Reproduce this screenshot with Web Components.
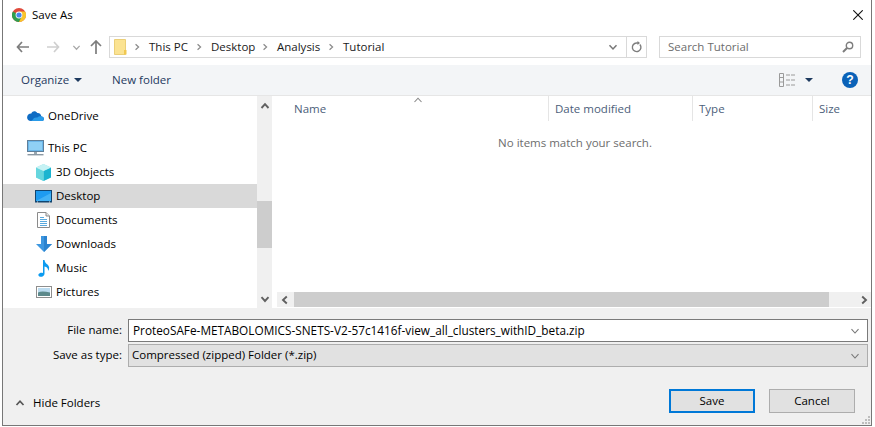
<!DOCTYPE html>
<html><head><meta charset="utf-8">
<style>
html,body{margin:0;padding:0;background:#fff;overflow:hidden}
body{font:11.5px "Open Sans","Noto Sans",sans-serif;color:#000}
</style></head>
<body>
<save-dialog>
  <title-bar slot="title">Save As</title-bar>
  <address-row slot="address"></address-row>
  <tool-bar slot="tools"></tool-bar>
  <nav-pane slot="nav">
    <nav-item icon="onedrive" level="0" style="margin-top:8px">OneDrive</nav-item>
    <nav-item icon="pc" level="0" style="margin-top:8px">This PC</nav-item>
    <nav-item icon="cube" level="1">3D Objects</nav-item>
    <nav-item icon="desktop" level="1" selected>Desktop</nav-item>
    <nav-item icon="docs" level="1">Documents</nav-item>
    <nav-item icon="down" level="1">Downloads</nav-item>
    <nav-item icon="music" level="1">Music</nav-item>
    <nav-item icon="pics" level="1">Pictures</nav-item>
  </nav-pane>
  <file-pane slot="files"></file-pane>
  <save-form slot="form"></save-form>
</save-dialog>
<script>
function def(name, css, html, init){
  customElements.define(name, class extends HTMLElement{
    connectedCallback(){
      if(this.shadowRoot) return;
      const r=this.attachShadow({mode:'open'});
      r.innerHTML='<style>'+css+'</style>'+html;
      if(init) init.call(this,r);
    }
  });
}
const chev=(d,c='#777',w=1.6,s=10)=>{
  const p={up:'M1.5 7 5 3.2 8.5 7',down:'M1.5 3.2 5 7 8.5 3.2',left:'M6.8 1.5 3 5l3.8 3.5',right:'M3.2 1.5 7 5 3.2 8.5'}[d];
  return `<svg width="${s}" height="${s}" viewBox="0 0 10 10"><path d="${p}" fill="none" stroke="${c}" stroke-width="${w}"/></svg>`;
};
const ICONS={
 onedrive:'<svg width="17" height="12" viewBox="0 0 17 12"><path d="M4 11h11c1.6 0 2-1.2 2-2.200 0-1.500-1.200-2.500-2.600-2.400C14 3.800 12 2.700 10.300 3 8.800 .6 5.500 .5 4.300 3.500 2 3.400 .2 5 .1 7.300 0 9.500 1.600 11 4 11z" fill="#0f6cc4"/><path d="M4 11h11c1.600 0 2-1.200 2-2.200 0-1.500-1.200-2.500-2.600-2.400-1.500-.3-3 0-4.100 1.200C8 7 6.500 8 6 9.500z" fill="#2a9be8"/></svg>',
 pc:'<svg width="17" height="16" viewBox="0 0 17 16"><rect x=".5" y=".5" width="16" height="11" fill="#6cb7ea" stroke="#5f7f99"/><rect x="2" y="2" width="13" height="8" fill="#8fd0f5"/><rect x="7" y="12" width="3" height="2" fill="#9aa7b0"/><rect x=".5" y="14" width="16" height="1.400" fill="#8b98a3"/></svg>',
 cube:'<svg width="17" height="17" viewBox="0 0 17 17"><path d="M8.500 0 16 3.500v10L8.500 17 1 13.500v-10z" fill="#8fe3e8"/><path d="M8.500 7 16 3.500v10L8.500 17z" fill="#1cb4d0"/><path d="M1 3.500 8.500 7v10L1 13.500z" fill="#66d6de"/><path d="M8.500 0 16 3.500 8.500 7 1 3.500z" fill="#c6f2f4"/></svg>',
 desktop:'<svg width="17" height="13" viewBox="0 0 17 13"><rect x="0" y="0" width="17" height="12.500" fill="#12456f"/><rect x="1" y="1" width="15" height="10" fill="#1e9bf0"/><path d="M1 11 16 3v8z" fill="#43b2f5"/><path d="M2 12h1M14 12h1" stroke="#ddd"/></svg>',
 docs:'<svg width="13" height="16" viewBox="0 0 13 16"><path d="M.5.500h8.500l3.500 3.500v11.500H.5z" fill="#fff" stroke="#8b8b8b"/><path d="M9 .5V4h3.500" fill="#e6e6e6" stroke="#8b8b8b"/><path d="M3 5.500h4M3 7.500h7M3 9.500h7M3 11.500h7M3 13.500h7" stroke="#5aa9dd"/></svg>',
 down:'<svg width="16" height="16" viewBox="0 0 16 16"><path d="M5 0h6v8h5l-8 8-8-8h5z" fill="#3d97e0"/><path d="M8 0h3v8h5l-8 8z" fill="#2b83cf"/></svg>',
 music:'<svg width="12" height="17" viewBox="0 0 12 17"><path d="M5 0h1.500c.3 2.500 1.500 3.300 3 4.500C11.500 6.200 11.800 9 10 11c.4-2.500-1-4-3.500-4.500v7.200c0 2-2.200 3.300-4.200 3.100C.7 16.600 0 15.400.5 14.300 1.200 12.900 3.300 12.300 5 13z" fill="#0c9bf0"/></svg>',
 pics:'<svg width="16" height="12" viewBox="0 0 16 12"><rect x=".5" y=".5" width="15" height="11" fill="#fff" stroke="#8e8e8e"/><rect x="2" y="2" width="12" height="8" fill="#bcdcf0"/><path d="M2 6.500c3-1.500 7-1 12 0V10H2z" fill="#5d8a8c"/></svg>'
};

def('save-dialog',
 `:host{display:grid;box-sizing:border-box;width:870px;height:426px;margin-left:2px;border:1px solid #777;border-top:0;
   grid-template-columns:minmax(0,1fr);grid-template-rows:30px 35px 31px 212px 1fr;background:#f0f0f0}
  .main{display:grid;grid-template-columns:269px minmax(0,1fr);background:#fff;min-height:0}`,
 `<slot name="title"></slot><slot name="address"></slot><slot name="tools"></slot>
  <div class="main"><slot name="nav"></slot><slot name="files"></slot></div><slot name="form"></slot>`);

def('title-bar',
 `:host{display:flex;align-items:center;background:#fff;padding:0 8px 0 9px;height:30px}
  .t{flex:1;margin-left:6px;padding-bottom:2px}
  svg{display:block}`,
 `<svg width="14" height="14" viewBox="0 0 14 14" style="margin-bottom:1px"><circle cx="7" cy="7" r="7" fill="#e04a3b"/><path d="M7 7 .9 3.500A7 7 0 0 0 7 14l3.500-6z" fill="#2f9e4f"/><path d="M7 3.500h6.100A7 7 0 0 1 7 14l3.500-7z" fill="#f8c52c"/><circle cx="7" cy="7" r="3.400" fill="#fff"/><circle cx="7" cy="7" r="2.600" fill="#4687ee"/></svg>
  <span class="t"><slot></slot></span>
  <svg width="10" height="10" viewBox="0 0 10 10"><path d="M.3.300l9.400 9.400M9.700.300.300 9.700" stroke="#111" stroke-width="1.100"/></svg>`);

def('address-row',
 `:host{display:flex;align-items:flex-start;background:#fff;height:35px;box-sizing:border-box;padding:6px 10px 0 13px}
  svg{display:block}
  .nav{display:flex;align-items:center;height:22px;width:93px}
  .box{display:flex;align-items:center;box-sizing:border-box;height:22px;border:1px solid #d9d9d9;width:538px;background:#fff}
  .path{flex:1;display:flex;align-items:center;min-width:0}
  .c{display:inline-flex;width:8px;justify-content:center;flex:none;margin-right:8px}
  .seg{color:#1a1a1a;flex:none;width:46px;padding-bottom:2px}
  .dd{width:26px;height:20px;display:flex;align-items:center;justify-content:center;border-right:1px solid #d9d9d9}
  .rf{width:19px;display:flex;justify-content:center}
  .search{display:flex;align-items:center;justify-content:space-between;box-sizing:border-box;margin-left:12px;width:202px;height:22px;border:1px solid #d9d9d9;padding:0 6px 0 8px;color:#6d6d6d}
  .search span{padding-bottom:2px}`,
 `<div class="nav">
   <svg width="14" height="12" viewBox="0 0 14 12"><path d="M6 1 1.500 6 6 11M1.500 6H13" fill="none" stroke="#7d7d7d" stroke-width="1.700"/></svg>
   <svg style="margin-left:16px" width="14" height="12" viewBox="0 0 14 12"><path d="M8 1l4.500 5L8 11M12.500 6H1" fill="none" stroke="#cfcfcf" stroke-width="1.700"/></svg>
   <span style="margin-left:12px;display:flex">${chev('down','#a8a8a8',1.4,9)}</span>
   <svg style="margin-left:9px" width="12" height="14" viewBox="0 0 12 14"><path d="M1 6 6 1l5 5M6 1v13" fill="none" stroke="#7d7d7d" stroke-width="1.700"/></svg>
  </div>
  <div class="box">
   <div class="path">
    <svg style="margin:0 6px 0 4px" width="13" height="16" viewBox="0 0 13 16"><path d="M.5.500h11v15H.5z" fill="#fbe392" stroke="#ebcf78"/><path d="M10 11h2.500v4.500H10z" fill="#f1c84f"/></svg>
    <span class="c">${chev('right','#8a8a8a',1.500,8)}</span>
    <span class="seg">This PC</span>
    <span class="c">${chev('right','#8a8a8a',1.500,8)}</span>
    <span class="seg" style="width:50px">Desktop</span>
    <span class="c">${chev('right','#8a8a8a',1.500,8)}</span>
    <span class="seg" style="width:50px">Analysis</span>
    <span class="c">${chev('right','#8a8a8a',1.500,8)}</span>
    <span class="seg">Tutorial</span>
   </div>
   <div class="dd">${chev('down','#777',1.500,10)}</div>
   <div class="rf"><svg width="11" height="12" viewBox="0 0 11 12"><path d="M8.900 3.500A4.300 4.300 0 1 1 5.500 2H8" fill="none" stroke="#7d7d7d" stroke-width="1.400"/><path d="M6.500 0 9 2 6.500 4z" fill="#7d7d7d"/></svg></div>
  </div>
  <div class="search"><span>Search Tutorial</span>
   <svg width="12" height="12" viewBox="0 0 12 12"><circle cx="7.500" cy="4.500" r="3.200" fill="none" stroke="#7d7d7d" stroke-width="1.400"/><path d="M5 7 1 11" stroke="#7d7d7d" stroke-width="2"/></svg></div>`);

def('tool-bar',
 `:host{display:flex;align-items:center;box-sizing:border-box;height:31px;background:#f3f5f7;border-bottom:1px solid #e6e6e6;padding:0 13px 0 18px;color:#1e3a5f}
  svg{display:block}
  .lb{padding-bottom:2px}
  .caret{width:0;height:0;border:4px solid transparent;border-top:4.500px solid #1e3a5f;border-bottom:0;margin-left:5px}
  .nf{margin-left:30px}.sp{flex:1}`,
 `<span class="lb">Organize</span><span class="caret"></span><span class="lb nf">New folder</span><span class="sp"></span>
  <svg width="16" height="14" viewBox="0 0 16 14"><path d="M.5.500h4v13h-4zM.5 4.500h4M.5 9h4" fill="none" stroke="#9a9a9a"/><path d="M7 2h4M12 2h4M7 7h4M12 7h4M7 12h4M12 12h4" stroke="#9a9a9a"/></svg>
  <span class="caret" style="margin-left:10px;margin-right:29px;border-width:4.500px 4px 0"></span>
  <svg width="16" height="16" viewBox="0 0 17 17"><circle cx="8.500" cy="8.500" r="8.500" fill="#0a62b8"/><text x="8.500" y="13" text-anchor="middle" font-family="Liberation Sans,sans-serif" font-weight="700" font-size="13" fill="#fff">?</text></svg>`);

def('nav-item',
 `:host{display:block;height:24px;color:#000}
  :host([selected]){background:#d9d9d9}
  .r{display:flex;align-items:center;height:24px}
  .i{width:17px;display:flex;justify-content:center;flex:none}
  .t{margin-left:4px;padding-bottom:2px}
  :host([level="0"]) .r{padding-left:24px}
  :host([level="1"]) .r{padding-left:32px}`,
 `<div class="r"><span class="i"></span><span class="t"><slot></slot></span></div>`,
 function(r){ r.querySelector('.i').innerHTML=ICONS[this.getAttribute('icon')]||''; });

def('nav-pane',
 `:host{display:grid;grid-template-columns:1fr 15px;background:#fff;height:212px;overflow:hidden}
  .list{overflow:hidden}
  .sb{display:flex;flex-direction:column;align-items:center;background:#f0f0f0;width:15px}
  .a{height:19px;display:flex;align-items:center;justify-content:center;flex:none}
  .tr{flex:1;width:100%;padding-top:86px;box-sizing:border-box}
  .th{height:47px;background:#cdcdcd}`,
 `<div class="list"><slot></slot></div>
  <div class="sb"><div class="a">${chev('up','#606060',1.900)}</div><div class="tr"><div class="th"></div></div><div class="a">${chev('down','#606060',1.900)}</div></div>`);

def('file-pane',
 `:host{display:flex;flex-direction:column;height:212px;background:#fff;padding-left:3px;position:relative;box-sizing:border-box;min-width:0}
  .hd{display:flex;height:25px;color:#4c607a;flex:none}
  .col{box-sizing:border-box;height:25px;line-height:25px;padding-left:6px;padding-bottom:1px;border-right:1px solid #e5e5e5;flex:none}
  .sort{position:absolute;left:141px;top:-3px}
  .body{flex:1;text-align:center;color:#6d6d6d;padding-top:10px;padding-left:4px;line-height:24px}
  .msg{display:block}
  .h{display:flex;height:15px;align-items:center;background:#f0f0f0;flex:none;margin-left:2px;margin-bottom:1px}
  .arr{width:15px;height:15px;display:flex;align-items:center;justify-content:center;flex:none}
  .tr{flex:1;display:flex;height:100%;padding-left:2px}
  .th{width:535px;background:#cdcdcd;height:100%}`,
 `<div class="hd">
    <div class="col" style="width:274px;padding-left:19px">Name</div>
    <div class="col" style="width:144px">Date modified</div>
    <div class="col" style="width:120px">Type</div>
    <div class="col" style="border:0;flex:1">Size</div>
  </div>
  <span class="sort">${chev('up','#888',1.100,10)}</span>
  <div class="body"><span class="msg">No items match your search.</span></div>
  <div class="h"><span class="arr">${chev('left','#606060',1.900)}</span><span class="tr"><span class="th"></span></span><span class="arr">${chev('right','#606060',1.900)}</span></div>`);

def('dlg-button',
 `:host{display:block;box-sizing:border-box;width:86px;height:24px;border:1px solid #adadad;background:#e1e1e1;text-align:center;line-height:21px;color:#000}
  :host([primary]){border:2px solid #0078d7;line-height:19px}`,
 `<slot></slot>`);

def('save-form',
 `:host{display:flex;flex-direction:column;box-sizing:border-box;background:#f0f0f0;padding:11px 2px 0 0;position:relative;height:117px}
  .f{display:grid;grid-template-columns:119px 740px;column-gap:6px;row-gap:2px;align-items:center}
  label{text-align:right;color:#000;padding-bottom:2px}
  .inp{box-sizing:border-box;height:23px;display:flex;align-items:center;justify-content:space-between;padding:0 7px 0 4px;border:1px solid #7a7a7a;background:#fff}
  .inp span{padding-bottom:2px}
  .fn{font-size:11.8px}
  .sel{background:#e1e1e1;border-color:#adadad;padding-left:3px}
  .foot{display:flex;align-items:center;margin-top:22px;height:24px;padding-left:12px}
  .hf{display:flex;align-items:center;gap:8px;flex:none;margin-top:4px}
  .hf span{padding-bottom:2px}
  .sp{flex:1}
  .cancel{margin-left:14px;margin-right:14px}
  .grip{position:absolute;right:1px;bottom:1px;width:9px;height:9px}`,
 `<div class="f">
    <label>File name:</label><div class="inp"><span class="fn">ProteoSAFe-METABOLOMICS-SNETS-V2-57c1416f-view_all_clusters_withID_beta.zip</span>${chev('down','#777',1.100)}</div>
    <label>Save as type:</label><div class="inp sel"><span>Compressed (zipped) Folder (*.zip)</span>${chev('down','#777',1.100)}</div>
  </div>
  <div class="foot">
    <span class="hf">${chev('up','#555',1.700)}<span>Hide Folders</span></span><span class="sp"></span>
    <dlg-button primary>Save</dlg-button><dlg-button class="cancel">Cancel</dlg-button>
  </div>
  <svg class="grip" viewBox="0 0 9 9"><path d="M7 1h2v2H7zM4 4h2v2H4zM7 4h2v2H7zM1 7h2v2H1zM4 7h2v2H4zM7 7h2v2H7z" fill="#bdbdbd"/></svg>`);
</script>
</body></html>
